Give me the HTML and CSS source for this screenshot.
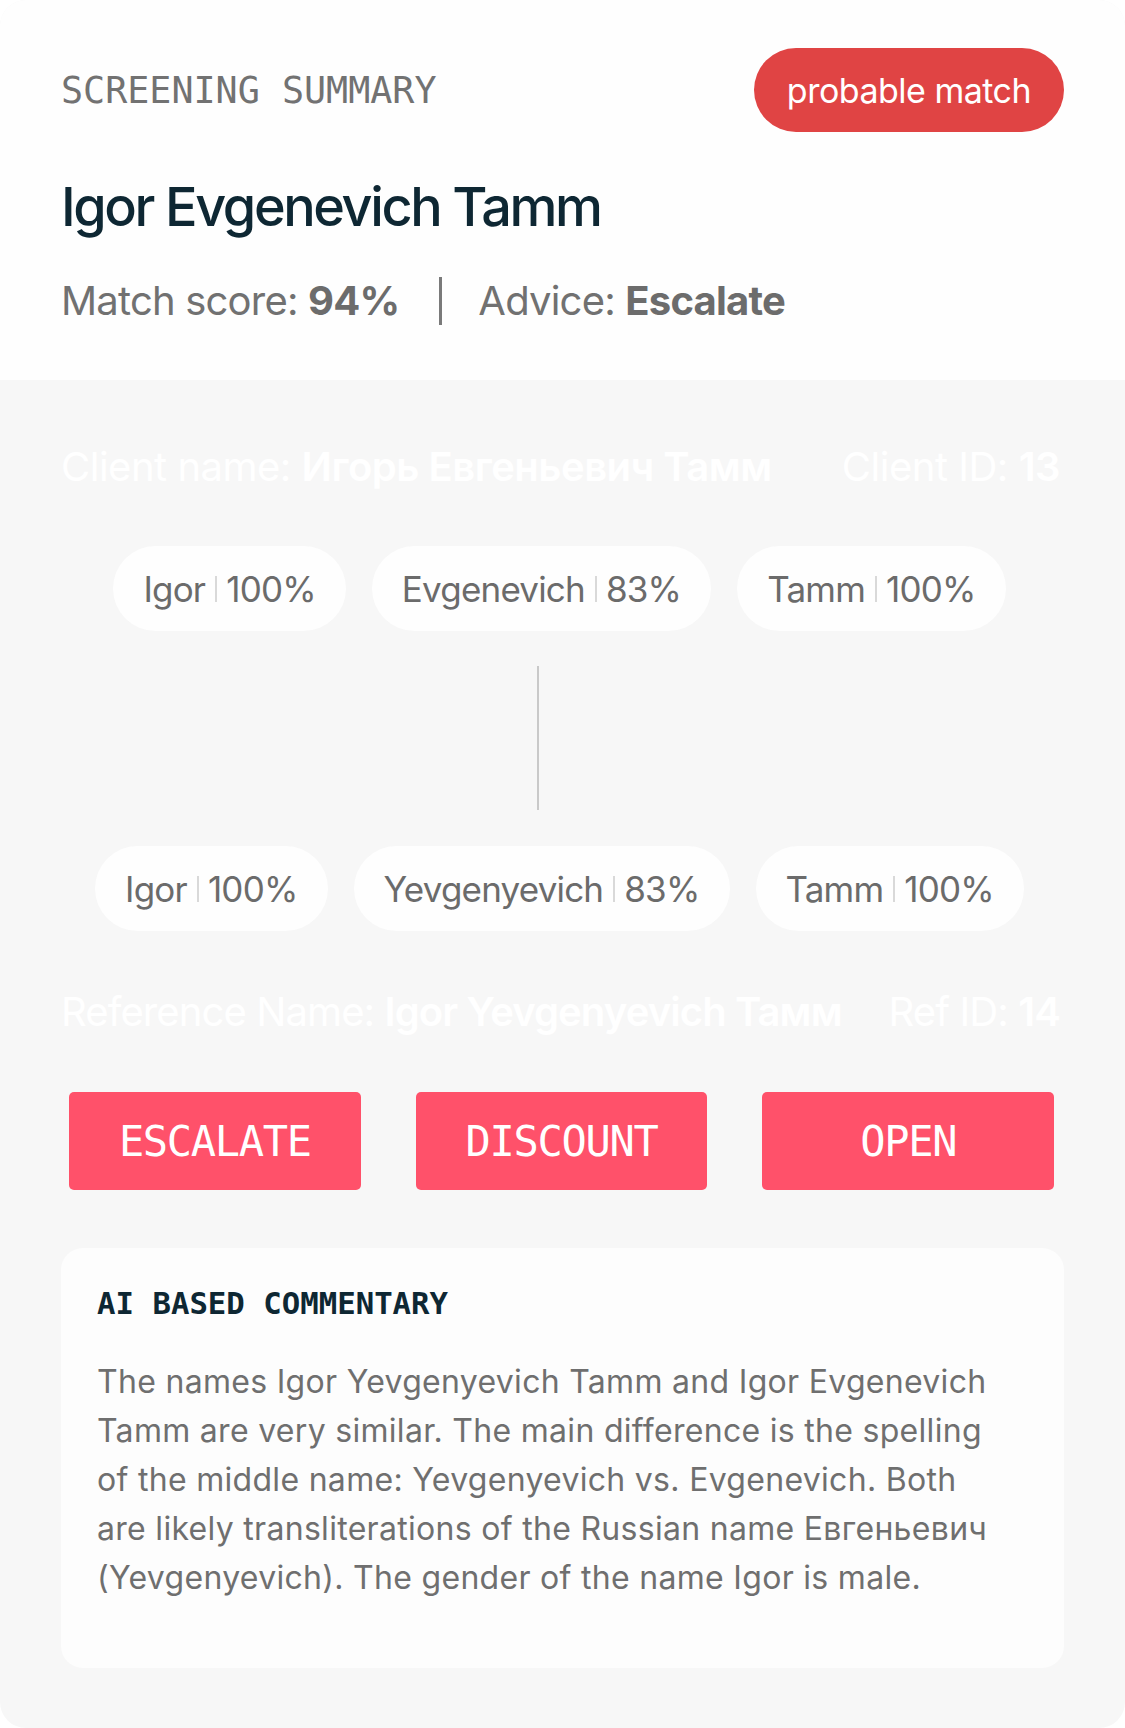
FILE: index.html
```html
<!DOCTYPE html>
<html lang="en">
<head>
<meta charset="utf-8">
<title>Screening summary</title>
<link rel="stylesheet" href="styles.css">
</head>
<body>
<main class="card">
  <header class="header">
    <div class="top-row">
      <h2 class="eyebrow">SCREENING SUMMARY</h2>
      <span class="badge">probable match</span>
    </div>
    <h1 class="name">Igor Evgenevich Tamm</h1>
    <div class="meta">
      <span>Match score: <b>94%</b></span>
      <span class="meta-sep"></span>
      <span>Advice: <b>Escalate</b></span>
    </div>
  </header>

  <section class="body">
    <div class="info-row">
      <span>Client name: <b>Игорь Евгеньевич Тамм</b></span>
      <span>Client ID: <b>13</b></span>
    </div>

    <div class="compare">
      <div class="chips">
        <span class="chip">Igor<i class="chip-sep"></i>100%</span>
        <span class="chip">Evgenevich<i class="chip-sep"></i>83%</span>
        <span class="chip">Tamm<i class="chip-sep"></i>100%</span>
      </div>
      <div class="connector"></div>
      <div class="chips">
        <span class="chip">Igor<i class="chip-sep"></i>100%</span>
        <span class="chip">Yevgenyevich<i class="chip-sep"></i>83%</span>
        <span class="chip">Tamm<i class="chip-sep"></i>100%</span>
      </div>
    </div>

    <div class="info-row info-row-ref">
      <span>Reference Name: <b>Igor Yevgenyevich Тамм</b></span>
      <span>Ref ID: <b>14</b></span>
    </div>

    <div class="actions">
      <button class="btn">ESCALATE</button>
      <button class="btn">DISCOUNT</button>
      <button class="btn">OPEN</button>
    </div>

    <article class="commentary">
      <h3 class="commentary-title">AI BASED COMMENTARY</h3>
      <p class="commentary-text">The names Igor Yevgenyevich Tamm and Igor Evgenevich Tamm are very similar. The main difference is the spelling of the middle name: Yevgenyevich vs. Evgenevich. Both are likely transliterations of the Russian name Евгеньевич (Yevgenyevich). The gender of the name Igor is male.</p>
    </article>
  </section>
</main>
</body>
</html>
```

FILE: styles.css
```css
* { box-sizing: border-box; }

html, body {
  margin: 0;
  padding: 0;
  background: #ffffff;
}

body {
  font-family: Inter, "Noto Sans", "Liberation Sans", sans-serif;
  width: 1125px;
}

.card {
  width: 1125px;
  min-height: 1728px;
  border-radius: 26px;
  overflow: hidden;
  background: #f7f7f7;
  display: flex;
  flex-direction: column;
}

.header {
  background: #fefefe;
  height: 380px;
  padding: 48px 61px 0 61px;
}

.top-row {
  display: flex;
  justify-content: space-between;
  align-items: center;
  height: 84px;
}

.eyebrow {
  margin: 0;
  font-family: "DejaVu Sans Mono", "Liberation Mono", monospace;
  font-weight: 400;
  font-size: 36.7px;
  color: #727272;
  letter-spacing: 0;
}

.badge {
  display: inline-flex;
  align-items: center;
  justify-content: center;
  height: 84px;
  width: 310px;
  border-radius: 42px;
  background: #e04444;
  color: #ffffff;
  font-size: 34px;
  letter-spacing: -0.5px;
  font-weight: 400;
}

.name {
  margin: 43px 0 0 0;
  font-size: 54px;
  line-height: 1.2;
  font-weight: 500;
  color: #0e2733;
  letter-spacing: -2.4px;
}

.meta {
  margin-top: 37px;
  display: flex;
  align-items: center;
  font-size: 40px;
  line-height: 48px;
  color: #717171;
  letter-spacing: -0.8px;
}

.meta b {
  font-weight: 700;
  color: #6c6c6c;
}

.meta-sep {
  width: 3px;
  height: 48px;
  background: #7a7a7a;
  margin: 0 36px 0 40px;
}

.body {
  padding: 63px 61px 60px 61px;
  display: flex;
  flex-direction: column;
  flex: 1;
}

.info-row {
  display: flex;
  justify-content: space-between;
  font-size: 40px;
  line-height: 48px;
  color: #ffffff;
  letter-spacing: -0.5px;
  padding-right: 4px;
}

.info-row b {
  font-weight: 600;
}

.info-row-ref {
  margin-top: 57px;
  letter-spacing: -0.9px;
}

.compare {
  margin-top: 55px;
  display: flex;
  flex-direction: column;
  align-items: center;
}

.chips {
  display: flex;
  justify-content: center;
  gap: 26px;
  margin-right: 6px;
}

.chip {
  display: inline-flex;
  align-items: center;
  height: 85px;
  padding: 0 30px;
  border-radius: 43px;
  background: #fefefe;
  color: #6b6b6b;
  font-size: 35px;
  letter-spacing: -0.8px;
  white-space: nowrap;
}

.chip-sep {
  display: inline-block;
  width: 2px;
  height: 26px;
  background: #d9d9d9;
  margin: 0 9px 0 10px;
}

.connector {
  width: 2px;
  height: 144px;
  background: #c9c9c9;
  margin: 35px 49px 36px 0;
}

.actions {
  margin-top: 56px;
  display: grid;
  grid-template-columns: repeat(3, 1fr);
  gap: 55px;
  padding: 0 10px 0 8px;
}

.btn {
  height: 98px;
  border: 0;
  border-radius: 5px;
  background: #ff516a;
  color: #ffffff;
  font-family: "DejaVu Sans Mono", "Liberation Mono", monospace;
  font-size: 42px;
  letter-spacing: -1.3px;
  font-weight: 400;
  padding: 0;
}

.commentary {
  margin-top: 58px;
  height: 420px;
  background: #fdfdfd;
  border-radius: 22px;
  padding: 38px 36px 0 36px;
}

.commentary-title {
  margin: 0;
  font-family: "DejaVu Sans Mono", "Liberation Mono", monospace;
  font-weight: 700;
  font-size: 30.7px;
  line-height: 36px;
  color: #0e2733;
}

.commentary-text {
  margin: 35px 0 0 0;
  max-width: 905px;
  font-size: 32px;
  line-height: 49px;
  color: #6f6f6f;
  letter-spacing: 0.3px;
}
```
